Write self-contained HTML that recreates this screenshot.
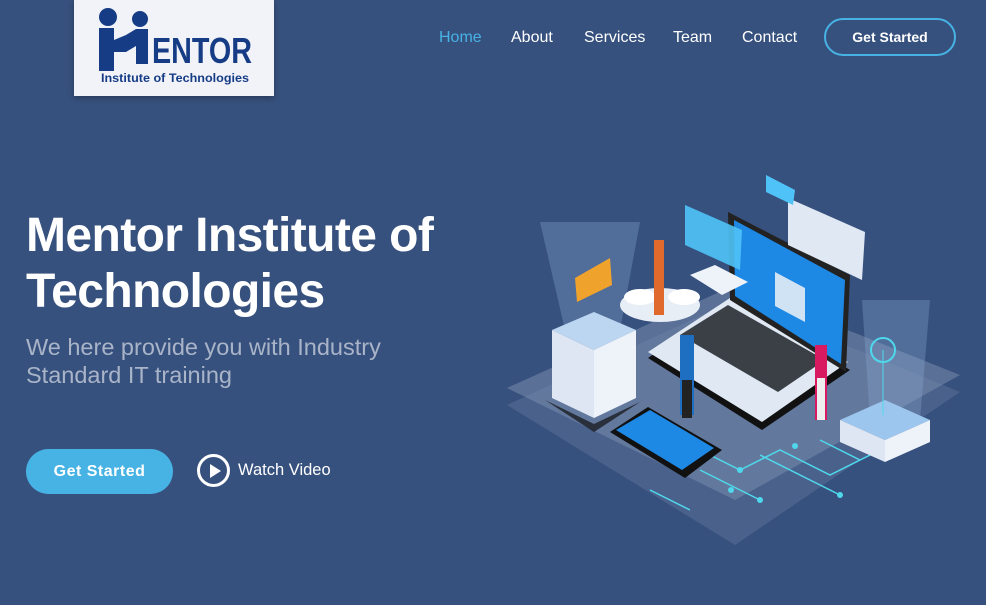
<!DOCTYPE html>
<html><head><meta charset="utf-8"><style>
*{margin:0;padding:0;box-sizing:border-box}
body{width:986px;height:605px;background:#37517e;font-family:"Liberation Sans",sans-serif;overflow:hidden;position:relative}
.logo{position:absolute;left:74px;top:0;width:200px;height:96px;background:#f1f3f8;box-shadow:0 2px 6px rgba(0,0,0,.3)}
.nav{position:absolute;top:29px;font-size:16px;color:#fff}
.nav span{position:absolute;white-space:nowrap}
.gs{position:absolute;left:824px;top:18px;width:132px;height:38px;border:2px solid #47b2e4;border-radius:20px;color:#fff;font-size:14px;font-weight:bold;text-align:center;line-height:34px}
h1{position:absolute;left:26px;top:208px;font-size:48px;line-height:56px;color:#fff;font-weight:bold;letter-spacing:-0.6px}
.sub{position:absolute;left:26px;top:333px;font-size:23.5px;line-height:28px;color:#a9b4c9}
.btn{position:absolute;left:26px;top:449px;width:147px;height:45px;background:#47b2e4;border-radius:23px;color:#fff;font-weight:bold;font-size:16px;text-align:center;line-height:45px;letter-spacing:.5px}
.play{position:absolute;left:197px;top:454px;width:33px;height:33px;border:3px solid #fff;border-radius:50%}
.play:after{content:"";position:absolute;left:10px;top:7px;border-left:11px solid #fff;border-top:7px solid transparent;border-bottom:7px solid transparent}
.wv{position:absolute;left:238px;top:461px;color:#fff;font-size:16.5px}
</style></head><body>
<div class="logo">
<svg width="200" height="96" viewBox="0 0 200 96">
<circle cx="34" cy="17" r="9" fill="#163c86"/><circle cx="66" cy="19" r="8" fill="#163c86"/>
<path d="M25 28h15v12l12 -5 10 -6h12v35h-12v-18l-10 6h-12v-4l-0 0v23h-15z" fill="#163c86"/>
<text x="78" y="63" font-family="Liberation Sans" font-weight="bold" font-size="36" fill="#163c86" textLength="100" lengthAdjust="spacingAndGlyphs">ENTOR</text>
<text x="27" y="82" font-family="Liberation Sans" font-weight="bold" font-size="11.5" fill="#163c86" textLength="148" lengthAdjust="spacingAndGlyphs">Institute of Technologies</text>
</svg></div>
<div class="nav"><span style="left:439px;color:#47b2e4">Home</span><span style="left:511px">About</span><span style="left:584px">Services</span><span style="left:673px">Team</span><span style="left:742px">Contact</span></div>
<div class="gs">Get Started</div>
<h1>Mentor Institute of<br>Technologies</h1>
<div class="sub">We here provide you with Industry<br>Standard IT training</div>
<div class="btn">Get Started</div>
<div class="play"></div><div class="wv">Watch Video</div>
<svg style="position:absolute;left:0;top:0" width="986" height="605">
<polygon points="507,405 735,300 960,392 735,545" fill="#5a6f95" opacity=".55"/>
<polygon points="507,388 735,285 960,375 735,500" fill="#7d8fb0" opacity=".5"/>
<polygon points="540,222 640,222 620,330 565,330" fill="#8fb0d8" opacity=".3"/>
<polygon points="862,300 930,300 920,420 870,420" fill="#8fb0d8" opacity=".3"/>
<g stroke="#4fd8ec" stroke-width="1.5" fill="none"><path d="M680 440l60 30 40-20 50 25 60-30M700 470l60 30M760 455l80 40M650 490l40 20M820 440l40 20 40-20"/></g>
<g fill="#4fd8ec"><circle cx="740" cy="470" r="3"/><circle cx="760" cy="500" r="3"/><circle cx="840" cy="495" r="3"/><circle cx="731" cy="490" r="3"/><circle cx="795" cy="446" r="3"/></g>
<polygon points="552,330 594,312 636,330 594,350" fill="#bcd6f2"/>
<polygon points="552,330 594,350 594,418 552,398" fill="#dde6f2"/>
<polygon points="594,350 636,330 636,398 594,418" fill="#eef3fa"/>
<polygon points="545,400 594,424 640,402 594,432" fill="#111" opacity=".7"/>
<polygon points="575,278 610,258 612,285 577,302" fill="#f0a32c"/>
<ellipse cx="660" cy="305" rx="40" ry="17" fill="#e8eef6"/><ellipse cx="640" cy="297" rx="16" ry="8" fill="#fff"/><ellipse cx="684" cy="297" rx="16" ry="8" fill="#fff"/>
<rect x="654" y="240" width="10" height="75" fill="#e0692e"/>
<polygon points="648,358 733,300 850,370 762,430" fill="#111"/>
<polygon points="648,352 733,296 848,362 762,422" fill="#dfe8f3"/>
<polygon points="680,335 728,305 825,360 778,392" fill="#3b3f46"/>
<polygon points="728,212 850,275 846,372 730,300" fill="#222"/>
<polygon points="734,220 845,280 841,364 735,296" fill="#1e88e5"/>
<polygon points="775,272 805,288 805,322 775,306" fill="#d0e3f5"/>
<polygon points="685,205 742,230 740,270 685,245" fill="#4fc3f7" opacity=".9"/>
<polygon points="788,198 865,232 862,280 788,245" fill="#dfe8f3"/>
<polygon points="766,175 795,190 793,205 766,192" fill="#4fc3f7"/>
<polygon points="690,275 715,265 748,282 722,295" fill="#eef3fa"/>
<rect x="680" y="335" width="14" height="80" fill="#1e6fc2"/><rect x="682" y="380" width="10" height="38" fill="#222"/>
<rect x="815" y="345" width="12" height="75" fill="#d81b60"/><rect x="817" y="378" width="8" height="42" fill="#eee"/>
<polygon points="610,432 648,407 722,450 685,478" fill="#111"/>
<polygon points="616,430 650,410 714,448 682,470" fill="#1e88e5"/>
<polygon points="840,420 885,400 930,420 885,440" fill="#9cc6ee"/>
<polygon points="840,420 885,440 885,462 840,442" fill="#dde6f2"/>
<polygon points="885,440 930,420 930,442 885,462" fill="#eef3fa"/>
<circle cx="883" cy="350" r="12" fill="none" stroke="#4fd8ec" stroke-width="2"/>
<line x1="883" y1="350" x2="883" y2="415" stroke="#4fd8ec"/>
</svg>
</body></html>
